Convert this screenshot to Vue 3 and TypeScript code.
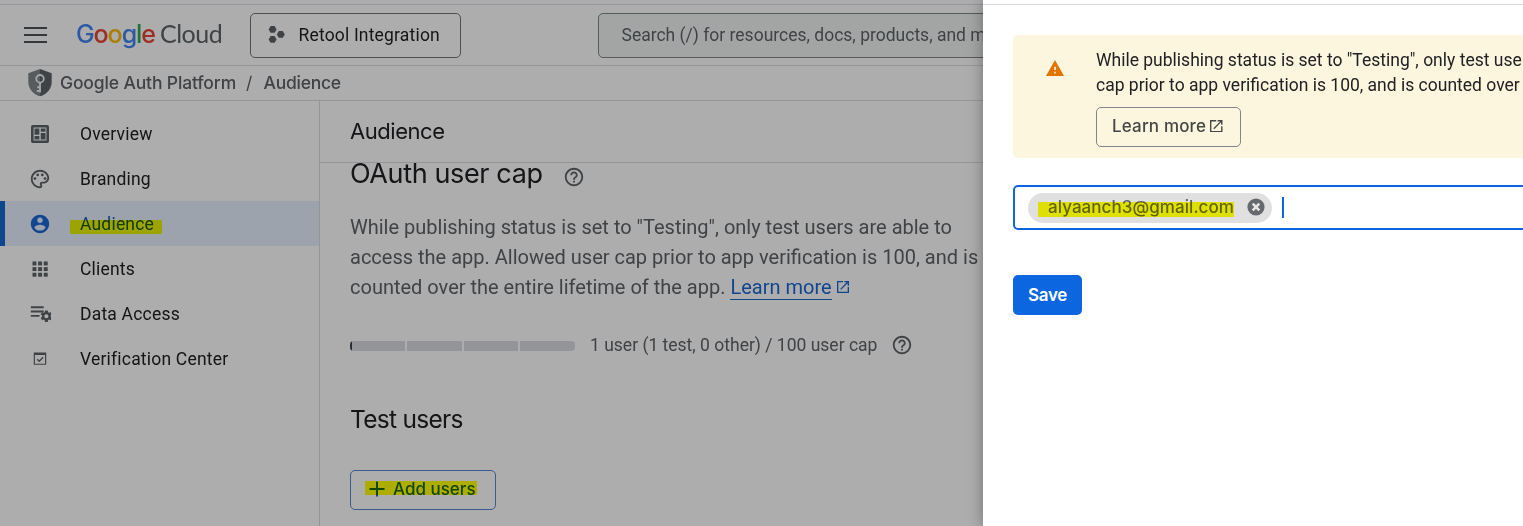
<script setup lang="ts">
interface NavItem { label: string; icon: string; active?: boolean }

const navItems: NavItem[] = [
  { label: 'Overview', icon: 'overview' },
  { label: 'Branding', icon: 'branding' },
  { label: 'Audience', icon: 'audience', active: true },
  { label: 'Clients', icon: 'clients' },
  { label: 'Data Access', icon: 'access' },
  { label: 'Verification Center', icon: 'verify' },
]

const gridCells = [3.8, 9.95, 16.1]

const helpPath = 'M11 18h2v-2h-2v2zm1-16C6.48 2 2 6.48 2 12s4.48 10 10 10 10-4.48 10-10S17.52 2 12 2zm0 18c-4.41 0-8-3.59-8-8s3.59-8 8-8 8 3.59 8 8-3.59 8-8 8zm0-14c-2.21 0-4 1.79-4 4h2c0-1.1.9-2 2-2s2 .9 2 2c0 2-3 1.75-3 5h2c0-2.25 3-2.5 3-5 0-2.21-1.79-4-4-4z'
const externalPath = 'M19 19H5V5h7V3H3v18h18v-9h-2v7zM14 3v2h3.59l-9.83 9.83 1.41 1.41L19 6.41V10h2V3h-7z'
const gearPath = 'M19.43 12.98c.04-.32.07-.64.07-.98s-.03-.66-.07-.98l2.11-1.65c.19-.15.24-.42.12-.64l-2-3.46c-.12-.22-.39-.3-.61-.22l-2.49 1c-.52-.4-1.08-.73-1.69-.98l-.38-2.65C14.46 2.18 14.25 2 14 2h-4c-.25 0-.46.18-.49.42l-.38 2.65c-.61.25-1.17.59-1.69.98l-2.49-1c-.23-.09-.49 0-.61.22l-2 3.46c-.13.22-.07.49.12.64l2.11 1.65c-.04.32-.07.65-.07.98s.03.66.07.98l-2.11 1.65c-.19.15-.24.42-.12.64l2 3.46c.12.22.39.3.61.22l2.49-1c.52.4 1.08.73 1.69.98l.38 2.65c.03.24.24.42.49.42h4c.25 0 .46-.18.49-.42l.38-2.65c.61-.25 1.17-.59 1.69-.98l2.49 1c.23.09.49 0 .61-.22l2-3.46c.12-.22.07-.49-.12-.64l-2.11-1.65zM12 15.5c-1.93 0-3.5-1.57-3.5-3.5s1.57-3.5 3.5-3.5 3.5 1.57 3.5 3.5-1.57 3.5-3.5 3.5z'
</script>

<template>
  <div class="page">
    <div class="console">
      <header class="topbar">
        <div class="menu"><i /><i /><i /></div>
        <div class="logo">
          <span class="google"><b class="blue">G</b><b class="red">o</b><b class="yellow">o</b><b class="blue">g</b><b class="green">l</b><b class="red">e</b></span>
          <span class="cloud">Cloud</span>
        </div>
        <button class="project">
          <svg class="hexes" width="18" height="20" viewBox="0 0 18 20">
            <path d="M2.6 1h4l2 3.4-2 3.4h-4l-2-3.4zM10.8 6h4l2 3.4-2 3.4h-4l-2-3.4zM2.6 11h4l2 3.4-2 3.4h-4l-2-3.4z" />
          </svg>
          <span>Retool Integration</span>
        </button>
        <div class="search">Search (/) for resources, docs, products, and more</div>
      </header>

      <div class="crumbs">
        <svg class="shield" width="24" height="28" viewBox="0 0 24 28">
          <path d="M12 0 .3 4.3V13c0 6.8 5 12.6 11.7 14.3z" fill="#80868b" />
          <path d="M12 0l11.7 4.3V13c0 6.8-5 12.6-11.7 14.3z" fill="#5f6368" />
          <circle cx="12" cy="9.8" r="3.8" fill="none" stroke="#f1f3f4" stroke-width="1.8" />
          <path d="M12 13.2V23.5M12 22H8.8M12 18.3H9.2" fill="none" stroke="#f1f3f4" stroke-width="1.9" />
        </svg>
        <span class="product">Google Auth Platform</span>
        <span class="slash">/</span>
        <span class="leaf">Audience</span>
      </div>

      <div class="body">
        <nav class="sidebar">
          <a v-for="item in navItems" :key="item.label" class="nav" :class="{ active: item.active }">
            <svg class="nav-icon" viewBox="0 0 24 24" width="22" height="22">
              <template v-if="item.icon === 'overview'">
                <path fill-rule="evenodd" d="M4 2.2h16a1.8 1.8 0 0 1 1.8 1.8v16a1.8 1.8 0 0 1-1.8 1.8H4A1.8 1.8 0 0 1 2.2 20V4A1.8 1.8 0 0 1 4 2.2zM5 5v14h14V5z" />
                <path d="M6 6h5.3v6.8H6zM12.8 6H18v3.6h-5.2zM6 14.2h5.3V18H6zM12.8 11H18v7h-5.2z" />
              </template>
              <template v-else-if="item.icon === 'branding'">
                <path d="M12 22C6.49 22 2 17.51 2 12S6.49 2 12 2s10 4.04 10 9c0 3.31-2.69 6-6 6h-1.77c-.28 0-.5.22-.5.5 0 .12.05.23.13.33.41.47.64 1.06.64 1.67A2.5 2.5 0 0 1 12 22zm0-18c-4.41 0-8 3.59-8 8s3.59 8 8 8c.28 0 .5-.22.5-.5a.54.54 0 0 0-.14-.35c-.41-.46-.63-1.05-.63-1.65a2.5 2.5 0 0 1 2.5-2.5H16c2.21 0 4-1.79 4-4 0-3.86-3.59-7-8-7z" />
                <circle cx="6.5" cy="11.5" r="1.5" /><circle cx="9.5" cy="7.5" r="1.5" />
                <circle cx="14.5" cy="7.5" r="1.5" /><circle cx="17.5" cy="11.5" r="1.5" />
              </template>
              <path v-else-if="item.icon === 'audience'" d="M12 2C6.48 2 2 6.48 2 12s4.48 10 10 10 10-4.48 10-10S17.52 2 12 2zm0 3c1.66 0 3 1.34 3 3s-1.34 3-3 3-3-1.34-3-3 1.34-3 3-3zm0 14.2c-2.5 0-4.71-1.28-6-3.22.03-1.99 4-3.08 6-3.08 1.99 0 5.97 1.09 6 3.08-1.29 1.94-3.5 3.22-6 3.22z" />
              <template v-else-if="item.icon === 'clients'">
                <template v-for="y in gridCells" :key="y">
                  <rect v-for="x in gridCells" :key="x" :x="x" :y="y" width="4.3" height="4.3" />
                </template>
              </template>
              <template v-else-if="item.icon === 'access'">
                <path d="M2 3.6h14v2.1H2zM2 8.3h14v2.1H2zM2 13h9.5v2.1H2z" />
                <path :d="gearPath" transform="translate(11.4 6.8) scale(.63)" />
              </template>
              <template v-else>
                <path fill-rule="evenodd" d="M5.2 4.8h13.6v13.6H5.2zM6.5 7.5v9.6h11V7.5z" />
                <path d="M9 12.200l2.200 2.200 4.200-4.200" fill="none" stroke="currentColor" stroke-width="1.5" />
              </template>
            </svg>
            <span class="nav-label">{{ item.label }}</span>
          </a>
        </nav>

        <main class="main">
          <div class="title">Audience</div>
          <div class="content">
            <div class="cap-head">
              <h2>OAuth user cap</h2>
              <svg class="help" width="22" height="22" viewBox="0 0 24 24"><path :d="helpPath" /></svg>
            </div>
            <p class="desc">
              While publishing status is set to "Testing", only test users are able to<br>
              access the app. Allowed user cap prior to app verification is 100, and is<br>
              counted over the entire lifetime of the app. <a class="link">Learn more</a><svg class="ext" width="12" height="12" viewBox="3 3 18 18"><path :d="externalPath" /></svg>
            </p>
            <div class="usage">
              <div class="meter"><i class="used" /><i /><i /><i /></div>
              <span class="usage-text">1 user (1 test, 0 other) / 100 user cap</span>
              <svg class="help" width="22" height="22" viewBox="0 0 24 24"><path :d="helpPath" /></svg>
            </div>
            <h3>Test users</h3>
            <button class="add">
              <svg width="16" height="16" viewBox="0 0 16 16"><path d="M7 .5h2V7h6.5v2H9v6.5H7V9H.5V7H7z" /></svg>
              <span>Add users</span>
            </button>
          </div>
        </main>
      </div>
      <div class="scrim" />
    </div>

    <aside class="drawer">
      <section class="alert">
        <svg class="warn" width="18" height="16" viewBox="1 2 22 19" preserveAspectRatio="none"><path d="M1 21h22L12 2 1 21zm12-3h-2v-2h2v2zm0-4h-2v-4h2v4z" /></svg>
        <div class="alert-body">
          <p>While publishing status is set to "Testing", only test use<br>cap prior to app verification is 100, and is counted over</p>
          <button class="learn">
            <span>Learn more</span>
            <svg width="12.5" height="12.5" viewBox="3 3 18 18"><path :d="externalPath" /></svg>
          </button>
        </div>
      </section>
      <div class="field">
        <div class="chip">
          <span class="mail">alyaanch3@gmail.com</span>
          <svg width="18" height="18" viewBox="0 0 18 18"><circle cx="9" cy="9" r="8.6" fill="#66696d" /><path d="M5.7 5.7l6.6 6.6M12.3 5.7l-6.6 6.6" stroke="#e6e6e6" stroke-width="2.6" /></svg>
        </div>
        <i class="caret" />
      </div>
      <button class="save">Save</button>
    </aside>
    <div class="topline" />
  </div>
</template>

<style>
body { margin: 0; overflow: hidden; }
</style>

<style scoped>
* { box-sizing: border-box; }
.page { position: relative; display: flex; width: 1523px; height: 526px; overflow: hidden; background: #fff; font-family: Roboto, "Liberation Sans", sans-serif; font-size: 17.5px; color: #202124; }
button { font: inherit; background: none; padding: 0; margin: 0; text-align: left; white-space: nowrap; }
svg { display: block; flex: none; fill: currentColor; }
.console { position: relative; flex: none; width: 983px; height: 526px; overflow: hidden; display: flex; flex-direction: column; }
.scrim { position: absolute; inset: 0; background: rgba(0, 0, 0, .32); }
.topline { position: absolute; left: 0; top: 4px; width: 100%; height: 1px; background: rgba(60, 64, 100, .2); }

.topbar { flex: none; height: 66px; padding: 5px 0 0 24px; display: flex; align-items: center; border-bottom: 1px solid #dadce0; }
.topbar > * { flex: none; }
.menu { display: grid; gap: 5px; width: 23px; }
.menu i { height: 2px; background: #4f5357; }
.logo { display: flex; align-items: baseline; margin: 0 0 3px 29px; width: 174px; height: 35px; line-height: 34px; white-space: nowrap; font-family: Inter, sans-serif; }
.google { width: 84px; font-size: 25px; letter-spacing: -1.1px; }
.google b { font-weight: 500; }
.blue { color: #4285f4; } .red { color: #ea4335; } .yellow { color: #fbbc04; } .green { color: #34a853; }
.cloud { font-family: Lato, sans-serif; font-size: 25px; letter-spacing: -.5px; color: #5f6368; }
.project { display: flex; align-items: center; width: 211px; height: 45px; padding-left: 17px; border: 1px solid #747775; border-radius: 5px; letter-spacing: .18px; color: #1f1f1f; }
.hexes { margin: -1px 12.5px 0 0; color: #5f6368; }
.search { margin-left: 137px; width: 430px; height: 45px; line-height: 43px; padding-left: 22.5px; border: 1px solid #80868b; border-radius: 5px; background: #f1f3f4; color: #5f6368; white-space: nowrap; }

.crumbs { flex: none; height: 35px; display: flex; align-items: center; padding-left: 28px; border-bottom: 1px solid #dadce0; font-family: Inter, sans-serif; font-weight: 500; font-size: 17.5px; color: #5f6368; white-space: nowrap; }
.crumbs span { padding-bottom: 2px; }
.product { margin-left: 8px; width: 186px; letter-spacing: -.14px; }
.slash { width: 17.5px; font-weight: 400; }
.leaf { letter-spacing: -.25px; }

.body { flex: 1; min-height: 0; display: flex; }
.sidebar { flex: none; width: 320px; padding-top: 10px; border-right: 1px solid #dadce0; }
.nav { position: relative; display: flex; align-items: center; height: 45px; padding-left: 29px; color: #5f6368; }
.nav-label { margin-left: 29px; padding-top: 1px; color: #202124; letter-spacing: .2px; line-height: 45px; }
.nav.active { background: #e8f0fe; color: #1a68d8; }
.nav.active::before { content: ""; position: absolute; left: 0; top: 0; width: 5px; height: 45px; background: #1967d2; }
.nav.active .nav-label { color: #185abc; }
.nav.active::after { content: ""; position: absolute; left: 70px; top: 19px; width: 92px; height: 14px; background: #ff0; mix-blend-mode: multiply; }

.main { flex: 1; min-width: 0; display: flex; flex-direction: column; }
.title { flex: none; height: 62px; line-height: 61px; padding-left: 30px; border-bottom: 1px solid #dadce0; font-family: Inter, sans-serif; font-size: 22px; letter-spacing: -.45px; color: #202124; }
.content { padding-left: 30px; }
.cap-head { display: flex; height: 36px; gap: 20px; }
h2 { margin: -6px 0 0; font: 400 27px/34px Inter, sans-serif; letter-spacing: -.37px; white-space: nowrap; }
.help { color: #5f6368; }
.cap-head .help { margin-top: 3px; }
.desc { margin: 13px 0 0; font-size: 20px; line-height: 30px; color: #5f6368; white-space: nowrap; }
.link { display: inline-block; height: 25px; line-height: 24px; border-bottom: 1px solid #1967d2; color: #1967d2; }
.ext { display: inline-block; margin: 0 0 1px 5px; color: #1967d2; }
.usage { display: flex; align-items: center; height: 30px; margin-top: 28px; color: #5f6368; }
.meter { display: flex; gap: 2px; width: 225px; height: 10px; margin-top: 2px; border-radius: 4px; overflow: hidden; }
.meter i { flex: 1; background: #dadce0; }
.meter .used { box-shadow: inset 2px 0 #37474f; }
.usage-text { margin-left: 15px; width: 301px; white-space: nowrap; }
h3 { margin: 44px 0 0; font: 400 24.5px/30px Inter, sans-serif; letter-spacing: -.72px; }
.add { position: relative; display: flex; align-items: center; gap: 8px; width: 146px; height: 40px; margin-top: 36px; padding: 0 0 2px 18px; border: 1px solid #5a83d0; border-radius: 5px; color: #1967d2; font-family: Inter, sans-serif; font-size: 17px; font-weight: 500; }
.add::after { content: ""; position: absolute; left: 14px; top: 10px; width: 112px; height: 14px; background: #ff0; mix-blend-mode: multiply; }

.drawer { position: relative; flex: none; width: 540px; padding: 35px 0 0 30px; background: #fff; box-shadow: 0 0 14px rgba(0, 0, 0, .35); }
.alert { display: flex; width: 530px; height: 123px; padding: 13px 0 0 33px; border-radius: 5px; background: #fdf6df; white-space: nowrap; }
.warn { margin-top: 12px; color: #e37400; }
.alert-body { margin-left: 32px; }
.alert p { margin: 0; line-height: 25px; }
.learn { display: flex; align-items: center; gap: 4px; width: 145px; height: 40px; margin-top: 9px; padding: 0 0 2px 15px; border: 1px solid #80868b; border-radius: 5px; font-family: Inter, sans-serif; font-size: 17px; font-weight: 500; letter-spacing: .16px; color: #444746; }
.field { display: flex; width: 530px; height: 45px; margin-top: 27px; padding: 6px 0 0 13px; border: 2px solid #0b66e0; border-radius: 5px; }
.chip { position: relative; display: flex; align-items: center; width: 244px; height: 30px; padding: 0 0 2px 20px; border-radius: 15px; background: #e0e0e0; color: #5f6368; }
.chip::after { content: ""; position: absolute; left: 10px; top: 9px; width: 196px; height: 15px; background: #ff0; mix-blend-mode: multiply; }
.mail { width: 199px; font-family: Inter, sans-serif; font-size: 17px; font-weight: 500; letter-spacing: .06px; }
.caret { width: 2px; height: 21px; margin: 4px 0 0 10px; background: #0b66e0; }
.save { width: 69px; height: 40px; margin-top: 45px; border: 0; border-radius: 5px; background: #0b66e0; color: #fff; text-align: center; font-family: Inter, sans-serif; font-size: 17px; font-weight: 600; letter-spacing: -.3px; }
</style>
